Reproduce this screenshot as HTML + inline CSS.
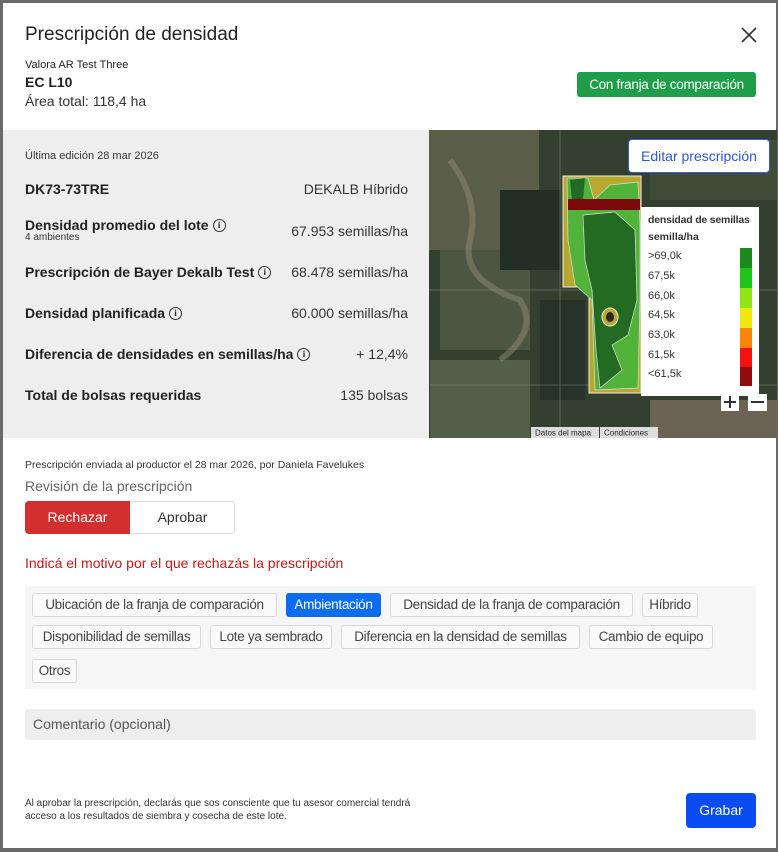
<!DOCTYPE html>
<html><head><meta charset="utf-8"><style>
*{margin:0;padding:0;box-sizing:border-box}
body{width:778px;height:852px;background:#6a6a6a;font-family:"Liberation Sans",sans-serif;color:#222;position:relative;overflow:hidden}
.m{position:absolute;left:3px;top:3px;width:773px;height:845px;background:#fff}
.a{position:absolute;white-space:nowrap}
.lbl{font-weight:bold;font-size:14px;color:#222;display:flex;align-items:center}
.val{font-size:14px;color:#333;right:370px;text-align:right}
.i{display:inline-block;width:13px;height:13px;border:1.3px solid #333;border-radius:50%;font-size:9px;line-height:11px;text-align:center;font-weight:bold;margin-left:4px;font-family:"Liberation Serif",serif;flex:none}
.chip{position:absolute;height:24px;border:1px solid #d8d8d8;border-radius:3px;background:#fafafa;font-size:13.5px;color:#444;line-height:22px;text-align:center;white-space:nowrap;letter-spacing:-0.3px}
.lg{position:absolute;left:648px;font-size:11px;color:#333}
</style></head><body>
<div class="m"></div>
<div class="a" style="left:25px;top:24px;font-size:19px;color:#222">Prescripción de densidad</div>
<svg class="a" style="left:741px;top:27px" width="16" height="16"><path d="M1 1L15 15M15 1L1 15" stroke="#333" stroke-width="1.6"/></svg>
<div class="a" style="left:25px;top:59px;font-size:11px;color:#222">Valora AR Test Three</div>
<div class="a" style="left:25px;top:74px;font-size:14px;font-weight:bold">EC L10</div>
<div class="a" style="left:25px;top:93px;font-size:14px;color:#333">Área total: 118,4 ha</div>
<div class="a" style="left:577px;top:72px;width:179px;height:25px;background:#1f9e4a;border-radius:3px;color:#fff;font-size:13.5px;line-height:25px;text-align:center;letter-spacing:-0.3px">Con franja de comparación</div>

<div class="a" style="left:3px;top:130px;width:426px;height:308px;background:#eeeeee"></div>
<div class="a" style="left:25px;top:150px;font-size:11px;color:#333">Última edición 28 mar 2026</div>
<div class="a lbl" style="left:25px;top:181px">DK73-73TRE</div><div class="a val" style="top:181px">DEKALB Híbrido</div>
<div class="a lbl" style="left:25px;top:217px">Densidad promedio del lote<span class="i">i</span></div>
<div class="a" style="left:25px;top:232px;font-size:10px;color:#333">4 ambientes</div>
<div class="a val" style="top:223px">67.953 semillas/ha</div>
<div class="a lbl" style="left:25px;top:264px">Prescripción de Bayer Dekalb Test<span class="i">i</span></div><div class="a val" style="top:264px">68.478 semillas/ha</div>
<div class="a lbl" style="left:25px;top:305px">Densidad planificada<span class="i">i</span></div><div class="a val" style="top:305px">60.000 semillas/ha</div>
<div class="a lbl" style="left:25px;top:346px">Diferencia de densidades en semillas/ha<span class="i">i</span></div><div class="a val" style="top:346px">+ 12,4%</div>
<div class="a lbl" style="left:25px;top:387px">Total de bolsas requeridas</div><div class="a val" style="top:387px">135 bolsas</div>

<svg class="a" style="left:429px;top:130px" width="348" height="308" viewBox="429 130 348 308">
<rect x="429" y="130" width="348" height="308" fill="#34402f"/>
<rect x="429" y="130" width="110" height="120" fill="#5a5e48"/>
<rect x="440" y="250" width="90" height="100" fill="#4c5642"/>
<rect x="500" y="190" width="60" height="80" fill="#232f25"/>
<rect x="650" y="140" width="127" height="60" fill="#3f4c38"/>
<rect x="540" y="300" width="45" height="100" fill="#26332a"/>
<rect x="430" y="360" width="100" height="78" fill="#52604a"/>
<rect x="650" y="400" width="127" height="38" fill="#6b6353"/>
<path d="M450 160 Q480 200 470 240 T520 300 Q540 330 500 360" stroke="#908a72" stroke-width="6" fill="none" opacity=".5"/>
<path d="M560 130V438M429 290H777M430 385H777" stroke="#8a8a78" stroke-width="1" opacity=".5"/>
<path d="M563 176H641V393H589V287H563Z" fill="#b9a82e" stroke="#eee" stroke-width="1"/>
<path d="M567 178L588 178 594 200 610 185 638 182 640 225 640 300 638 388 595 390 592 300 575 285 568 240Z" fill="#52b33a" stroke="#ddd" stroke-width=".7"/>
<path d="M583 215 615 212 635 230 637 300 628 335 612 345 622 370 600 388 596 350 592 290 585 260Z" fill="#236b22" stroke="#ddd" stroke-width=".7"/>
<path d="M570 180 585 178 583 200 572 200Z" fill="#236b22"/>
<ellipse cx="610" cy="317" rx="8" ry="9" fill="#b9a82e" stroke="#eee"/>
<ellipse cx="610" cy="317" rx="4" ry="5" fill="#2a2a22"/>
<rect x="568" y="199" width="72" height="11" fill="#7a0a0a"/>
<rect x="641" y="207" width="118" height="189" fill="#fff"/>
<rect x="740" y="248" width="12" height="20" fill="#1d8a1d"/>
<rect x="740" y="268" width="12" height="20" fill="#20c51c"/>
<rect x="740" y="288" width="12" height="20" fill="#8ee619"/>
<rect x="740" y="308" width="12" height="20" fill="#f1e80f"/>
<rect x="740" y="328" width="12" height="20" fill="#fb850c"/>
<rect x="740" y="348" width="12" height="19" fill="#f5110d"/>
<rect x="740" y="367" width="12" height="19" fill="#920c0c"/>
<rect x="721" y="394" width="18" height="17" fill="#fff"/><rect x="748" y="394" width="19" height="17" fill="#fff"/>
<path d="M724 402H736M730 396V408M751 402H764" stroke="#333" stroke-width="2"/>
<rect x="531" y="427" width="68" height="11" fill="#ddd"/><rect x="600" y="427" width="58" height="11" fill="#ddd"/>
<text x="535" y="435.5" font-size="8" fill="#222" font-family="Liberation Sans">Datos del mapa</text>
<text x="604" y="435.5" font-size="8" fill="#222" font-family="Liberation Sans">Condiciones</text>
</svg>
<div class="a" style="left:628px;top:139px;width:142px;height:34px;background:#fff;border:1px solid #3b5bdb;border-radius:4px;color:#2f57d4;font-size:14px;line-height:32px;text-align:center">Editar prescripción</div>
<div class="lg" style="top:214px;font-weight:bold;font-size:10.5px;letter-spacing:-0.2px">densidad de semillas</div>
<div class="lg" style="top:231px;font-weight:bold;font-size:10.5px">semilla/ha</div>
<div class="lg" style="top:250px">&gt;69,0k</div><div class="lg" style="top:270px">67,5k</div><div class="lg" style="top:290px">66,0k</div><div class="lg" style="top:309px">64,5k</div><div class="lg" style="top:329px">63,0k</div><div class="lg" style="top:349px">61,5k</div><div class="lg" style="top:368px">&lt;61,5k</div>

<div class="a" style="left:25px;top:459px;font-size:10.5px;color:#333">Prescripción enviada al productor el 28 mar 2026, por Daniela Favelukes</div>
<div class="a" style="left:25px;top:478px;font-size:14px;color:#666">Revisión de la prescripción</div>
<div class="a" style="left:25px;top:501px;width:210px;height:33px;border:1px solid #ddd;border-radius:4px;background:#fff"></div>
<div class="a" style="left:25px;top:501px;width:105px;height:33px;background:#d32f2f;border-radius:4px 0 0 4px;color:#fff;font-size:14px;line-height:33px;text-align:center">Rechazar</div>
<div class="a" style="left:130px;top:501px;width:105px;height:33px;color:#333;font-size:14px;line-height:33px;text-align:center">Aprobar</div>
<div class="a" style="left:25px;top:555px;font-size:14px;color:#c41a1a">Indicá el motivo por el que rechazás la prescripción</div>

<div class="a" style="left:25px;top:586px;width:731px;height:103px;background:#f6f6f6"></div>
<div class="chip" style="left:32px;top:593px;width:245px">Ubicación de la franja de comparación</div>
<div class="chip" style="left:286px;top:593px;width:95px;background:#0b6cf2;border-color:#0b6cf2;color:#fff">Ambientación</div>
<div class="chip" style="left:390px;top:593px;width:243px">Densidad de la franja de comparación</div>
<div class="chip" style="left:642px;top:593px;width:56px">Híbrido</div>
<div class="chip" style="left:32px;top:625px;width:169px">Disponibilidad de semillas</div>
<div class="chip" style="left:210px;top:625px;width:122px">Lote ya sembrado</div>
<div class="chip" style="left:341px;top:625px;width:239px">Diferencia en la densidad de semillas</div>
<div class="chip" style="left:589px;top:625px;width:124px">Cambio de equipo</div>
<div class="chip" style="left:32px;top:659px;width:45px">Otros</div>

<div class="a" style="left:25px;top:709px;width:731px;height:31px;background:#eeeeee;border-radius:3px;font-size:14px;color:#555;line-height:31px;padding-left:8px">Comentario (opcional)</div>
<div class="a" style="left:25px;top:797px;font-size:10px;color:#333;line-height:13px">Al aprobar la prescripción, declarás que sos consciente que tu asesor comercial tendrá<br>acceso a los resultados de siembra y cosecha de este lote.</div>
<div class="a" style="left:686px;top:793px;width:70px;height:35px;background:#0a4cf0;border-radius:4px;color:#fff;font-size:14px;line-height:35px;text-align:center">Grabar</div>
</body></html>
